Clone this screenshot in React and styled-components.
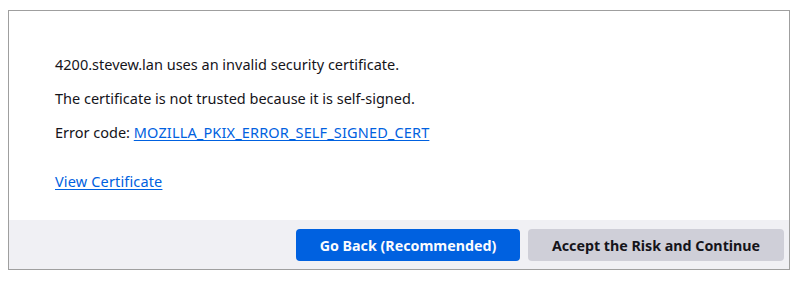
import React from "react";
import styled, { createGlobalStyle } from "styled-components";

const Global = createGlobalStyle`
  html, body { margin: 0; padding: 0; background: #fff; }
  body { font-family: "Noto Sans", "Open Sans", sans-serif; color: #15141a; }
`;

const Frame = styled.div`
  margin: 10px 0 0 8px;
  width: 780px;
  height: 258px;
  border: 1px solid #9f9f9f;
  display: flex;
  flex-direction: column;
  background: #fff;
`;

const Body = styled.div`
  flex: 1;
  padding: 43px 0 0 46px;
  display: flex;
  flex-direction: column;
`;

const Line = styled.p`
  margin: 0 0 ${(p) => p.$gap ?? 14}px;
  font-size: 14.5px;
  line-height: 20px;
  white-space: nowrap;
`;

const Link = styled.a`
  color: #0061e0;
  text-decoration: underline;
  text-underline-offset: 2px;
  cursor: pointer;
  letter-spacing: 0.15px;
`;

const Footer = styled.div`
  height: 49px;
  background: #f0f0f4;
  display: flex;
  justify-content: flex-end;
  align-items: flex-start;
  gap: 8px;
  padding: 9px 5px 0 0;
  box-sizing: border-box;
`;

const Button = styled.button`
  height: 32px;
  border: none;
  border-radius: 4px;
  padding: 0;
  font-family: inherit;
  font-weight: 700;
  font-size: 14.25px;
  background: ${(p) => (p.$primary ? "#0061e0" : "#cfcfd8")};
  color: ${(p) => (p.$primary ? "#fbfbfe" : "#15141a")};
  width: ${(p) => p.$w}px;
  white-space: nowrap;
`;

export default function App() {
  return (
    <>
      <Global />
      <Frame>
        <Body>
          <Line>4200.stevew.lan uses an invalid security certificate.</Line>
          <Line>The certificate is not trusted because it is self-signed.</Line>
          <Line $gap={29}>
            Error code: <Link>MOZILLA_PKIX_ERROR_SELF_SIGNED_CERT</Link>
          </Line>
          <Line>
            <Link>View Certificate</Link>
          </Line>
        </Body>
        <Footer>
          <Button $primary $w={224}>Go Back (Recommended)</Button>
          <Button $w={256}>Accept the Risk and Continue</Button>
        </Footer>
      </Frame>
    </>
  );
}
